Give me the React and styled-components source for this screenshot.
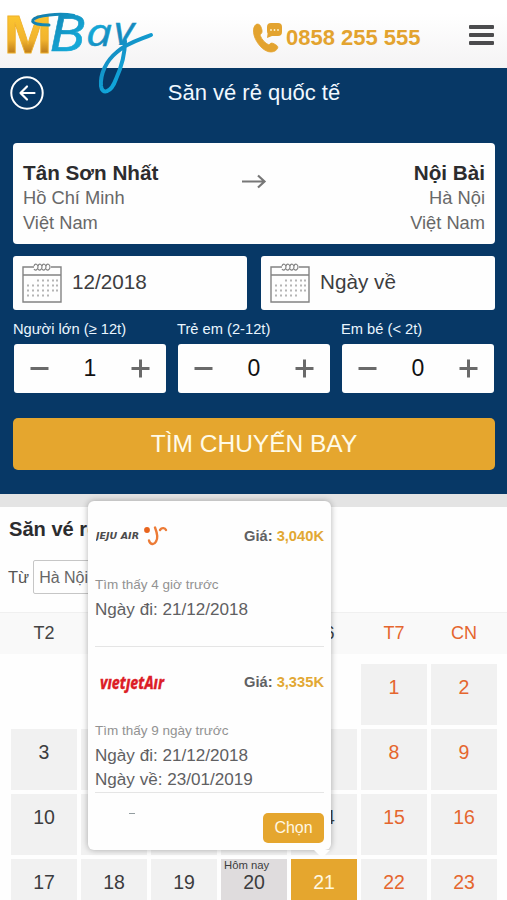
import { useState } from "react";
import styled, { createGlobalStyle } from "styled-components";

const GlobalStyle = createGlobalStyle`
    * { box-sizing: border-box; }
    body {
        margin: 0;
        background: #fefefe;
        font-family: "Liberation Sans", Arial, sans-serif;
        color: #333;
        overflow: hidden;
    }
    button { font-family: inherit; border: 0; padding: 0; cursor: pointer; }
`

const Page = styled.div`
    width: 507px;
    height: 900px;
    overflow: hidden;
`

const Header = styled.header`
    position: relative;
    z-index: 1;
    height: 68px;
    display: flex;
    align-items: flex-start;
    background: linear-gradient(#fff 20%, #f4f3f4);
`

const LogoSvg = styled.svg`
    width: 160px;
    height: 100px;
    flex: none;
    overflow: visible;
`

const Hotline = styled.a`
    display: flex;
    align-items: center;
    gap: 3px;
    margin: 20px 0 0 93px;
    height: 34px;
    color: #e3a32f;
    font-size: 22px;
    font-weight: 700;
    white-space: nowrap;
`

const HotlineNumber = styled.span`
    padding-top: 2px;
`

const MenuButton = styled.button`
    display: flex;
    flex-direction: column;
    gap: 4px;
    width: 25px;
    margin: 25px 13px 0 auto;
    background: none;
`

const MenuLine = styled.span`
    height: 4px;
    border-radius: 1px;
    background: #4b4b4d;
`

const Search = styled.section`
    height: 426px;
    padding: 0 12px 0 13px;
    background: #073866;
`

const TitleBar = styled.div`
    display: grid;
    grid-template-columns: 34px 1fr 34px;
    align-items: center;
    height: 50px;
    margin: 0 -3px;
    color: #f1f8ff;
`

const BackButton = styled.button`
    height: 34px;
    background: none;
    color: #fff;
`

const PageTitle = styled.h1`
    margin: 0;
    font-size: 22px;
    font-weight: 400;
    text-align: center;
`

const Route = styled.div`
    display: flex;
    justify-content: space-between;
    height: 101px;
    margin-top: 25px;
    padding: 18px 10px 0;
    border-radius: 4px;
    background: #fefefe;
`

const Place = styled.div`
    width: 180px;
    text-align: ${props => props.align};
    font-size: 18.3px;
    line-height: 25px;
    color: #686868;
`

const Airport = styled.div`
    font-size: 20.7px;
    line-height: 24px;
    font-weight: 700;
    color: #2c2c2e;
    white-space: nowrap;
`

const Dates = styled.div`
    display: grid;
    grid-template-columns: 1fr 1fr;
    gap: 14px;
    margin-top: 12px;
`

const DateField = styled.div`
    display: flex;
    align-items: center;
    gap: 10px;
    height: 54px;
    padding: 0 9px;
    border-radius: 3px;
    background: #fefefe;
    color: #3d3d3f;
    font-size: 20.7px;
`

const DateValue = styled.span`
    padding-bottom: 2px;
`

const Passengers = styled.div`
    display: grid;
    grid-template-columns: repeat(3, 152px);
    gap: 12px;
    margin: 9px 0 0 1px;
`

const CounterLabel = styled.div`
    height: 25px;
    margin-left: -1px;
    font-size: 14.7px;
    line-height: 20px;
    color: #eaf6ff;
    white-space: nowrap;
`

const Counter = styled.div`
    display: flex;
    align-items: center;
    justify-content: space-between;
    height: 49px;
    padding: 0 16px;
    border-radius: 3px;
    background: #fefefe;
    color: #111;
    font-size: 23px;
`

const StepButton = styled.button`
    width: 19px;
    height: 19px;
    background: none;
    color: #6a6a6a;
`

const SearchButton = styled.button`
    display: block;
    width: 100%;
    height: 52px;
    margin-top: 25px;
    border-radius: 5px;
    background: #e5a62e;
    color: #fffbe8;
    font-size: 24.5px;
`

const Divider = styled.div`
    height: 13px;
    background: #e4e4e4;
`

const Deals = styled.section`
    position: relative;
`

const DealsTitle = styled.h2`
    margin: 0;
    padding: 10px 0 0 9px;
    font-size: 20.1px;
    line-height: 24px;
    color: #2c2c2e;
`

const Filter = styled.div`
    display: flex;
    align-items: center;
    gap: 5px;
    margin: 19px 0 18px 8px;
    height: 34px;
    font-size: 16.5px;
    color: #555;
`

const CitySelect = styled.div`
    width: 150px;
    height: 34px;
    margin-left: -1px;
    padding: 1px 0 0 5px;
    border: 1px solid #c6c6c6;
    border-radius: 2px;
    font-size: 16px;
    line-height: 32px;
    color: #666;
`

const Week = styled.div`
    display: grid;
    grid-template-columns: repeat(7, 66px);
    column-gap: 4px;
    padding-left: 11px;
`

const WeekHead = styled(Week)`
    height: 42px;
    margin-bottom: 10px;
    border-top: 1px solid #f0f0f0;
    background: #f9f9f9;
    line-height: 41px;
    font-size: 18px;
    text-align: center;
`

const Weekday = styled.div`
    color: ${props => props.$weekend ? "#e5662e" : "#444"};
`

const Days = styled(Week)`
    row-gap: 4px;
`

const dayBackground = { normal: "#f1f1f1", today: "#dfdcdd", selected: "#e5a62e", empty: "transparent" }

const Day = styled.div`
    position: relative;
    height: 61px;
    padding-top: 11px;
    background: ${props => dayBackground[props.$state]};
    color: ${props => props.$state === "selected" ? "#fff8e0" : props.$weekend ? "#e5662e" : "#3c3c3e"};
    font-size: 19.5px;
    line-height: 24px;
    text-align: center;
`

const TodayLabel = styled.span`
    position: absolute;
    top: 0;
    left: 3px;
    font-size: 11.3px;
    line-height: 12px;
    white-space: nowrap;
`

const Popup = styled.div`
    position: absolute;
    z-index: 2;
    top: -6px;
    left: 88px;
    width: 243px;
    height: 349px;
    padding: 0 7px;
    border-radius: 6px;
    background: #fefefe;
    box-shadow: 0 0 6px rgba(0, 0, 0, 0.3);
    &::after {
        content: "";
        position: absolute;
        top: 100%;
        left: 226px;
        border: 8px solid transparent;
        border-top-color: #fefefe;
        border-bottom: 0;
    }
`

const Deal = styled.div`
    height: 146px;
    padding: 20px 0 0;
    border-bottom: 1px solid #e5e5e5;
    font-size: 17.1px;
    line-height: 24.5px;
    color: #606062;
    white-space: nowrap;
`

const DealTop = styled.div`
    display: flex;
    align-items: center;
    justify-content: space-between;
    height: 30px;
    margin-bottom: 22px;
    padding-left: 1px;
    font-size: 14.7px;
    font-weight: 700;
`

const Price = styled.span`
    color: #e2a834;
`

const Found = styled.div`
    font-size: 13.5px;
    color: #929292;
`

const PopupFooter = styled.div`
    display: flex;
    justify-content: space-between;
    align-items: flex-start;
    padding: 20px 0 0 34px;
`

const Dash = styled.span`
    width: 6px;
    height: 1px;
    background: #939da0;
`

const ChooseButton = styled.button`
    width: 61px;
    height: 30px;
    border-radius: 5px;
    background: #e5a62e;
    color: #fff8e4;
    font-size: 16px;
`

function Logo() {
    return (
        <LogoSvg viewBox="0 0 160 100">
            <defs>
                <linearGradient id="gold" x1="0" y1="0" x2="0" y2="1">
                    <stop offset="0.2" stopColor="#fbc52f" />
                    <stop offset="0.6" stopColor="#f1b32e" />
                    <stop offset="0.82" stopColor="#bd7c1c" />
                </linearGradient>
                <linearGradient id="sky" gradientUnits="userSpaceOnUse" x1="40" y1="15" x2="110" y2="90">
                    <stop offset="0" stopColor="#137fae" />
                    <stop offset="0.45" stopColor="#14a9d8" />
                    <stop offset="0.65" stopColor="#1687bb" />
                    <stop offset="1" stopColor="#10a5da" />
                </linearGradient>
                <clipPath id="aboveTail">
                    <rect x="105" y="10" width="50" height="35" />
                </clipPath>
            </defs>
            <text x="4" y="53" fontFamily="Liberation Sans, Arial, sans-serif" fontSize="54" fontWeight="700" textLength="48" lengthAdjust="spacingAndGlyphs" fill="url(#gold)" stroke="#efb02c" strokeWidth="0.8">M</text>
            <g fill="url(#sky)" stroke="url(#sky)" strokeWidth="0.5" fontStyle="italic">
                <text x="50" y="51" fontFamily="Roboto, sans-serif" fontSize="50" textLength="36" lengthAdjust="spacingAndGlyphs">B</text>
                <text x="86" y="46" fontFamily="Open Sans, sans-serif" fontSize="38" textLength="26" lengthAdjust="spacingAndGlyphs">a</text>
                <text x="114" y="44" fontFamily="Open Sans, sans-serif" fontSize="38" textLength="20" lengthAdjust="spacingAndGlyphs" clipPath="url(#aboveTail)">y</text>
            </g>
            <g fill="none" stroke="url(#sky)" strokeLinecap="round" strokeLinejoin="round">
                <path d="M74 15.500C60 13 36 15 33 20c-2 4 8 5 16 5" strokeWidth="3" />
                <path d="M125 41c0 13-4 27-9 38-5 14-14 16-15 7-1-12 5-25 16-34 10-9 22-12 34-17" strokeWidth="4" />
            </g>
        </LogoSvg>
    )
}

function PhoneIcon() {
    return (
        <svg width="30" height="32" viewBox="0 0 30 32">
            <path d="M2 4.500C4 2 7 3 8 6c2 5 1 6-1 8 2 5 5 8 9 10 2-3 4-2 7 0 3 1.600 2 4-1 6-4 2-9 1-14-4C1 19-1.500 9 2 4.500Z" fill="#e3a32f" stroke="#e3a32f" strokeWidth="0.800" />
            <path d="M18 2h7a4 4 0 0 1 4 4v5a4 4 0 0 1-4 4h-6l-5 2 .6-4.500C14 11.500 14 10 14 8V6a4 4 0 0 1 4-4Z" fill="#e3a32f" />
            <g fill="#fff3cd">
                <circle cx="18" cy="9" r="0.900" />
                <circle cx="21.500" cy="9" r="0.900" />
                <circle cx="25" cy="9" r="0.900" />
            </g>
        </svg>
    )
}

function BackIcon() {
    return (
        <svg width="34" height="34" viewBox="0 0 34 34" fill="none" stroke="currentColor" strokeWidth="2" strokeLinecap="round" strokeLinejoin="round">
            <circle cx="17" cy="17" r="15.700" />
            <path d="M24.500 17H11M17 10.500 10.500 17l6.500 6.500" strokeWidth="2.200" />
        </svg>
    )
}

function RouteArrow() {
    return (
        <svg width="26" height="41" viewBox="0 0 26 41" fill="none" stroke="#777" strokeWidth="2.200">
            <path d="M1 20.500h22M17 14.500l6.500 6-6.500 6" />
        </svg>
    )
}

const calendarRows = [[16, 21, 26, 31, 35], [6, 11, 16, 21, 26, 31, 35], [6, 11, 16, 21, 26, 31, 35], [6, 11, 16, 21, 26]]

function CalendarIcon() {
    return (
        <svg width="40" height="40" viewBox="0 0 40 40" fill="none" stroke="#838383">
            <path d="M12 4H1v35h38V4H29M1 12h38" strokeWidth="1.400" />
            {[13, 17, 21, 25].map(x => (
                <path key={x} d={`M${x - 1} 3c1-3 4-2 4 1s-3 4-4 2`} strokeWidth="1.200" />
            ))}
            <g fill="#b4b4b4" stroke="none">
                {calendarRows.map((row, i) => row.map(x => (
                    <rect key={`${i}-${x}`} x={x - 1} y={16.500 + i * 5} width="2" height="2" />
                )))}
            </g>
        </svg>
    )
}

function StepIcon({ plus }) {
    return (
        <svg width="19" height="19" viewBox="0 0 19 19" fill="none" stroke="currentColor" strokeWidth="3">
            <path d={plus ? "M0.500 9.500h18M9.500 0.500v18" : "M0.500 9.500h18"} />
        </svg>
    )
}

function JejuLogo() {
    return (
        <svg width="74" height="24" viewBox="0 0 74 24">
            <text x="0" y="15" fontFamily="DejaVu Sans, sans-serif" fontSize="9.500" fontWeight="700" fontStyle="italic" fill="#4c4c4c" textLength="43" lengthAdjust="spacingAndGlyphs">JEJU AIR</text>
            <circle cx="51" cy="6" r="2.900" fill="#e8641d" />
            <path d="M59 3.500c2 5 3 11 1 14-2 4-6 3-7-1M64 6c2-3 5-2 6 0" fill="none" stroke="#ec7b36" strokeWidth="2.400" strokeLinecap="round" />
        </svg>
    )
}

function VietjetLogo() {
    return (
        <svg width="74" height="36" viewBox="0 0 74 36">
            <text x="4" y="25" fontFamily="Noto Sans, Open Sans, sans-serif" fontWeight="800" fontStyle="italic" fontSize="17" fill="#dc1d27" stroke="#dc1d27" strokeWidth="0.300" textLength="64" lengthAdjust="spacingAndGlyphs">vıetȷetAır</text>
        </svg>
    )
}

function PassengerCounter({ label, initial }) {
    const [count, setCount] = useState(initial)

    return (
        <div>
            <CounterLabel>{label}</CounterLabel>
            <Counter>
                <StepButton onClick={() => setCount(Math.max(0, count - 1))}><StepIcon /></StepButton>
                <span>{count}</span>
                <StepButton onClick={() => setCount(count + 1)}><StepIcon plus /></StepButton>
            </Counter>
        </div>
    )
}

function DealItem({ logo, price, found, dates }) {
    return (
        <Deal>
            <DealTop>
                {logo}
                <span>Giá: <Price>{price}</Price></span>
            </DealTop>
            <Found>{found}</Found>
            {dates.map(date => <div key={date}>{date}</div>)}
        </Deal>
    )
}

const weekdays = ["T2", "T3", "T4", "T5", "T6", "T7", "CN"]
const days = [null, null, null, null, null, ...Array.from({ length: 23 }, (_, i) => i + 1)]

function dayState(day) {
    if (!day) return "empty"
    if (day === 20) return "today"
    if (day === 21) return "selected"
    return "normal"
}

export default function App() {
    return (
        <Page>
            <GlobalStyle />
            <Header>
                <Logo />
                <Hotline>
                    <PhoneIcon />
                    <HotlineNumber>0858 255 555</HotlineNumber>
                </Hotline>
                <MenuButton>
                    <MenuLine />
                    <MenuLine />
                    <MenuLine />
                </MenuButton>
            </Header>
            <Search>
                <TitleBar>
                    <BackButton><BackIcon /></BackButton>
                    <PageTitle>Săn vé rẻ quốc tế</PageTitle>
                </TitleBar>
                <Route>
                    <Place align="left">
                        <Airport>Tân Sơn Nhất</Airport>
                        <div>Hồ Chí Minh</div>
                        <div>Việt Nam</div>
                    </Place>
                    <RouteArrow />
                    <Place align="right">
                        <Airport>Nội Bài</Airport>
                        <div>Hà Nội</div>
                        <div>Việt Nam</div>
                    </Place>
                </Route>
                <Dates>
                    <DateField><CalendarIcon /><DateValue>12/2018</DateValue></DateField>
                    <DateField><CalendarIcon /><DateValue>Ngày về</DateValue></DateField>
                </Dates>
                <Passengers>
                    <PassengerCounter label="Người lớn (≥ 12t)" initial={1} />
                    <PassengerCounter label="Trẻ em (2-12t)" initial={0} />
                    <PassengerCounter label="Em bé (< 2t)" initial={0} />
                </Passengers>
                <SearchButton>TÌM CHUYẾN BAY</SearchButton>
            </Search>
            <Divider />
            <Deals>
                <DealsTitle>Săn vé rẻ</DealsTitle>
                <Filter>
                    Từ
                    <CitySelect>Hà Nội</CitySelect>
                </Filter>
                <WeekHead>
                    {weekdays.map((name, i) => <Weekday key={name} $weekend={i > 4}>{name}</Weekday>)}
                </WeekHead>
                <Days>
                    {days.map((day, i) => (
                        <Day key={i} $state={dayState(day)} $weekend={i % 7 > 4}>
                            {day === 20 && <TodayLabel>Hôm nay</TodayLabel>}
                            {day}
                        </Day>
                    ))}
                </Days>
                <Popup>
                    <DealItem logo={<JejuLogo />} price="3,040K" found="Tìm thấy 4 giờ trước" dates={["Ngày đi: 21/12/2018"]} />
                    <DealItem logo={<VietjetLogo />} price="3,335K" found="Tìm thấy 9 ngày trước" dates={["Ngày đi: 21/12/2018", "Ngày về: 23/01/2019"]} />
                    <PopupFooter>
                        <Dash />
                        <ChooseButton>Chọn</ChooseButton>
                    </PopupFooter>
                </Popup>
            </Deals>
        </Page>
    )
}
